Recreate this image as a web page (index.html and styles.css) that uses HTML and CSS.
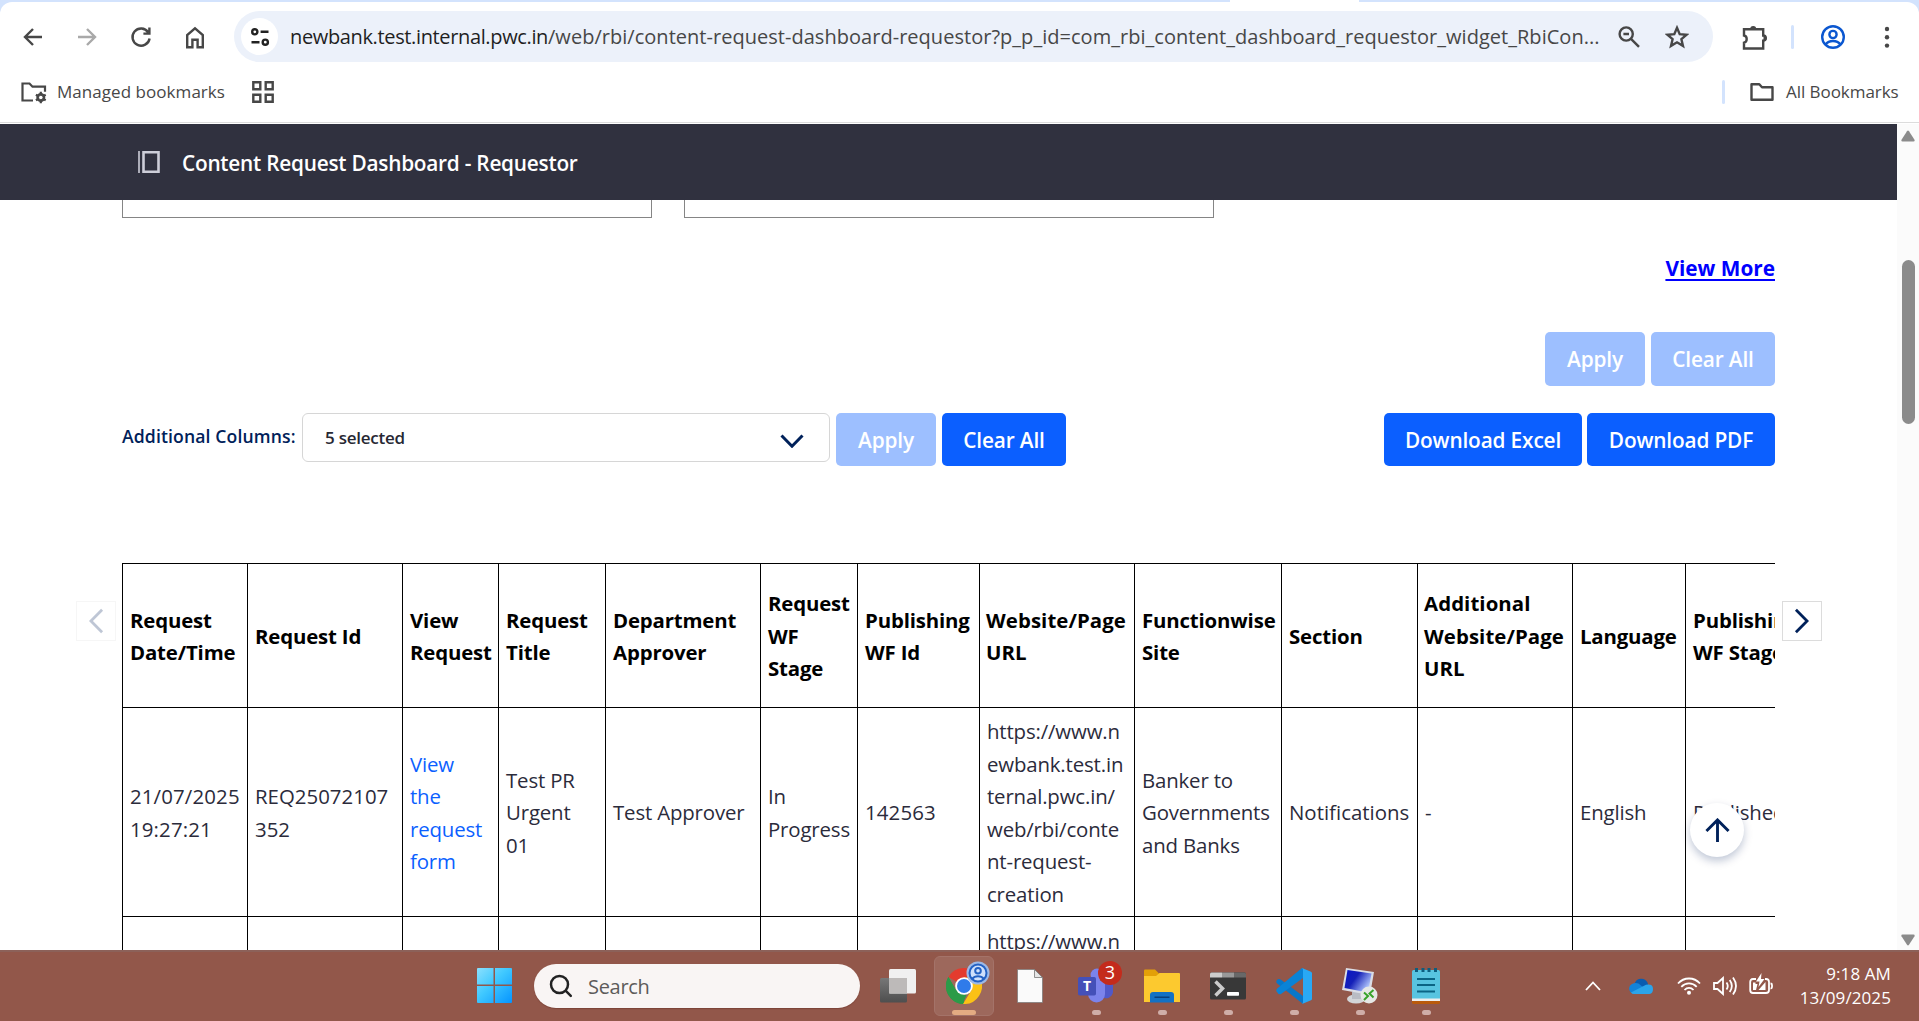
FILE: index.html
```html
<!DOCTYPE html>
<html lang="en">
<head>
<meta charset="utf-8">
<title>Content Request Dashboard - Requestor</title>
<link rel="stylesheet" href="styles.css">
</head>
<body>
<div class="screen">
  <header class="browser">
    <div class="tabstrip"><span class="tab-foot"></span></div>
    <div class="chrome-top">
      <div class="toolbar">
        <div class="nav">
          <svg class="ic" viewBox="0 0 24 24"><path d="M21 12H4M12 4L4 12l8 8"/></svg>
          <svg class="ic dim" viewBox="0 0 24 24"><path d="M3 12H20M12 4l8 8-8 8"/></svg>
          <svg class="ic" viewBox="0 0 24 24"><path d="M19.2 7.2A8.6 8.6 0 1 0 20.6 13.5M20.4 2.6v6h-6"/></svg>
          <svg class="ic" viewBox="0 0 24 24"><path d="M4.2 22.2V10L12 3.4 19.800 10v12.200h-5.200V14.700H9.400v7.500z"/></svg>
        </div>
        <div class="omnibox">
          <span class="tune"><svg class="ic" viewBox="0 0 24 24"><circle cx="6.800" cy="6.800" r="2.600"/><path d="M12.600 6.800H20.500M3.500 17.200h8"/><circle cx="17.300" cy="17.200" r="2.600"/></svg></span>
          <span class="url"><b>newbank.test.internal.pwc.in</b>/web/rbi/content-request-dashboard-requestor?p_p_id=com_rbi_content_dashboard_requestor_widget_RbiCon...</span>
          <svg class="ic lens" viewBox="0 0 24 24"><circle cx="9.200" cy="9" r="6.600"/><path d="M6.400 9h5.600M14 13.800l8 8"/></svg>
          <svg class="ic star" viewBox="0 0 24 24"><path d="M12 2.800l2.700 6.300 6.900.6-5.200 4.500 1.600 6.700-6-3.600-6 3.600 1.600-6.700-5.200-4.500 6.900-.6z"/></svg>
        </div>
        <svg class="ic puzzle" viewBox="0 0 26 26"><path d="M3 5.200h19.200v6.300a2.600 2.600 0 0 1 0 5.200V24.500H3v-5.800c3.600-.6 3.600-6.600 0-7.200z"/><path class="fill" d="M9.200 5a3 3 0 0 1 6 0zM22.500 11.200a3 3 0 0 1 0 6z"/></svg>
        <span class="bar"></span>
        <svg class="ic profile" viewBox="0 0 26 26"><circle cx="13" cy="13" r="10.800"/><circle cx="13" cy="10.500" r="3.600"/><path d="M5.500 20.500c3.500-4.600 11.500-4.600 15 0"/></svg>
        <svg class="dots" viewBox="0 0 6 24"><circle cx="3" cy="4" r="2.200"/><circle cx="3" cy="12.300" r="2.200"/><circle cx="3" cy="20.600" r="2.200"/></svg>
      </div>
      <div class="bookmarks">
        <svg class="managed" viewBox="0 0 28 24"><path d="M13 20.500H2.500V3.500h7l3 3.200H25v5"/><circle cx="20.800" cy="17.500" r="3.400"/><path d="M20.800 11.800v11.400M15.900 14.700l9.800 5.600M25.700 14.700l-9.800 5.600"/><circle class="hole" cx="20.800" cy="17.500" r="1.800"/></svg>
        <span class="bm bm-managed">Managed bookmarks</span>
        <svg class="apps" viewBox="0 0 22 22"><path d="M1.300 1.300h7v7h-7zM13.700 1.300h7v7h-7zM1.300 13.700h7v7h-7zM13.700 13.700h7v7h-7z"/></svg>
        <span class="grow"></span>
        <span class="bar"></span>
        <svg class="folder" viewBox="0 0 24 20"><path d="M1.500 2.200h7.800l2.700 3h10.500v12.500h-21z"/></svg>
        <span class="bm bm-all">All Bookmarks</span>
      </div>
    </div>
  </header>

  <div class="viewport">
    <main class="page">
      <div class="control-menu">
        <svg viewBox="0 0 22 22"><path d="M1 0v22"/><path class="thick" d="M5.500 1.300h15v19.400h-15z"/></svg>
        <h1>Content Request Dashboard - Requestor</h1>
      </div>
      <div class="content">
        <div class="fields"><div class="field"></div><div class="field"></div></div>
        <div class="more"><a href="#">View More</a></div>
        <div class="filter-actions">
          <button class="btn off w-apply">Apply</button><button class="btn off w-clear">Clear All</button>
        </div>
        <div class="columns-row">
          <label>Additional Columns:</label>
          <div class="select"><span>5 selected</span><svg viewBox="0 0 24 14"><path d="M1.500 1.500L12 12.200 22.500 1.500"/></svg></div>
          <button class="btn off w-apply">Apply</button>
          <button class="btn w-clear">Clear All</button>
          <span class="grow"></span>
          <button class="btn w-excel">Download Excel</button>
          <button class="btn w-pdf">Download PDF</button>
        </div>
        <div class="table-area">
          <div class="scroller">
            <table>
              <colgroup><col class="c125"><col class="c155"><col class="c96"><col class="c107"><col class="c155"><col class="c97"><col class="c122"><col class="c155"><col class="c147"><col class="c136"><col class="c155"><col class="c113"><col class="c155"></colgroup>
              <thead>
                <tr><th>Request<br>Date/Time</th><th>Request Id</th><th>View<br>Request</th><th>Request<br>Title</th><th>Department<br>Approver</th><th>Request<br>WF<br>Stage</th><th>Publishing<br>WF Id</th><th class="wide">Website/Page<br>URL</th><th>Functionwise<br>Site</th><th>Section</th><th class="wide">Additional<br>Website/Page<br>URL</th><th>Language</th><th>Publishing<br>WF Stage</th></tr>
              </thead>
              <tbody>
                <tr><td class="num">21/07/2025<br>19:27:21</td><td class="id">REQ25072107<br>352</td><td><a href="#">View<br>the<br>request<br>form</a></td><td>Test PR<br>Urgent<br>01</td><td>Test Approver</td><td>In<br>Progress</td><td class="num">142563</td><td>https://www.n<br>ewbank.test.in<br>ternal.pwc.in/<br>web/rbi/conte<br>nt-request-<br>creation</td><td>Banker to<br>Governments<br>and Banks</td><td class="id">Notifications</td><td>-</td><td>English</td><td>Published</td></tr>
                <tr class="partial"><td></td><td></td><td></td><td></td><td></td><td></td><td></td><td>https://www.n</td><td></td><td></td><td></td><td></td><td></td></tr>
              </tbody>
            </table>
          </div>
          <span class="pager prev"><svg viewBox="0 0 16 28"><path d="M14 2L2 14l12 12"/></svg></span>
          <span class="pager next"><svg viewBox="0 0 16 28"><path d="M2 2l12 12L2 26"/></svg></span>
        </div>
      </div>
      <span class="to-top"><svg viewBox="0 0 26 26"><path d="M13 25V2.500M1.500 13.500L13 2l11.500 11.500"/></svg></span>
    </main>
    <div class="scrollbar">
      <svg class="arrow" viewBox="0 0 14 12"><path d="M6 1.200q1-1.200 2 0l5.500 8.600q.6 1.700-1 1.700h-11q-1.600 0-1-1.700z"/></svg>
      <span class="thumb"></span>
      <svg class="arrow down" viewBox="0 0 14 12"><path d="M6 1.200q1-1.200 2 0l5.500 8.600q.6 1.700-1 1.700h-11q-1.600 0-1-1.700z"/></svg>
    </div>
  </div>

  <footer class="taskbar">
    <div class="apps-row">
      <svg class="win" viewBox="0 0 35 35"><defs><linearGradient id="w" x1="0" y1="0" x2="35" y2="35" gradientUnits="userSpaceOnUse"><stop offset="0" stop-color="#8be0fd"/><stop offset=".45" stop-color="#3fc8ff"/><stop offset="1" stop-color="#0594ff"/></linearGradient></defs><path fill="url(#w)" d="M1 0h15.500v16.500H0V1q0-1 1-1zM18 0h16q1 0 1 1v15.500H18zM0 18h16.500v17H1q-1 0-1-1zM18 18h17v16q0 1-1 1H18z"/></svg>
      <div class="search"><svg viewBox="0 0 24 24"><circle cx="10.500" cy="10.500" r="8.500"/><path d="M16.800 16.800l5 5"/></svg><span>Search</span></div>
      <div class="app"><svg viewBox="0 0 36 34"><defs><linearGradient id="a" x2="0" y2="1"><stop stop-color="#777"/><stop offset="1" stop-color="#4e4e4e"/></linearGradient></defs><rect y="9" width="27" height="24.500" rx="1.500" fill="url(#a)"/><rect x="9" width="27" height="24.500" rx="1.500" fill="#f0f0f0"/><path d="M9 9h18v15.500H9z" fill="#bdbab9"/></svg></div>
      <div class="app active"><svg viewBox="0 0 36 36"><path fill="#e33b2e" d="M18 18L2.400 9A18 18 0 0 1 33.600 9z"/><path fill="#2b9b48" d="M18 18L18 36A18 18 0 0 1 2.400 9L10.200 22.500z"/><path fill="#fbc116" d="M18 9.500H33.800A18 18 0 0 1 17 36L25.500 22z"/><path fill="#2b9b48" d="M2.400 9l7.800 13.500L18 27l3-1-4.500 10A18 18 0 0 1 2.400 9z"/><circle cx="18" cy="18" r="8.800" fill="#fff"/><circle cx="18" cy="18" r="7" fill="#2f7bea"/></svg>
        <svg class="badge-user" viewBox="0 0 24 24"><circle cx="12" cy="12" r="11.500" fill="#9db9e6"/><circle cx="12" cy="12" r="9" fill="#cfe0fb"/><g fill="none" stroke="#2462c4" stroke-width="2"><circle cx="12" cy="12" r="8.500"/><circle cx="12" cy="9.800" r="2.800"/><path d="M6 18c3-3.600 9-3.600 12 0"/></g></svg><i class="run wide"></i></div>
      <div class="app"><svg viewBox="0 0 36 36"><path fill="#fafafa" stroke="#777" stroke-width=".7" d="M5.500 1.500h17l8 8v25h-25z"/><path fill="#e6e6e6" stroke="#777" stroke-width=".8" d="M22.500 1.500v8h8z"/></svg></div>
      <div class="app"><svg viewBox="0 0 36 36"><circle cx="19" cy="7" r="6.500" fill="#7b83eb"/><path fill="#5059c9" d="M24 12h11v12a7 7 0 0 1-11 5z"/><path fill="#7b83eb" d="M10 13h17v13a8.500 8.500 0 0 1-17 0z"/><rect x="0" y="9" width="18" height="18.500" rx="1.800" fill="#4450b8"/><text class="team-t" x="9" y="23.300">T</text></svg><b class="badge">3</b><i class="run"></i></div>
      <div class="app"><svg viewBox="0 0 36 36"><path fill="#e3a008" d="M0 2.500q0-1 1-1h10l4 4v6H0z"/><path fill="#fcc92f" d="M0 8h12l3.500-3H35q1 0 1 1v28H0z"/><path fill="#1371c4" d="M6 34.500V27q0-3 3-3h18q3 0 3 3v7.500z"/><path fill="#083f7b" d="M10.500 28.500h15v1.500h-15z"/></svg><i class="run"></i></div>
      <div class="app"><svg viewBox="0 0 36 36"><rect y="4.500" width="36" height="27" rx="1.500" fill="#383838"/><path fill="#ccc" d="M0 9.500V6q0-1.500 1.500-1.500H12v5z"/><path fill="#999" d="M12 4.500h12v5H12z"/><path fill="#686868" d="M24 4.500h10.500Q36 4.500 36 6v3.500H24z"/><path d="M5.500 13.500l7 7-7 7" fill="none" stroke="#ccc" stroke-width="3.500"/><rect x="17" y="24" width="12" height="3.800" rx=".7" fill="#fff"/></svg><i class="run"></i></div>
      <div class="app"><svg viewBox="0 0 36 36"><path fill="#0877c9" d="M.6 12.500Q2.500 10 5 11.800L27 28v8L1.200 15.500Q-.3 14 .6 12.500z"/><path fill="#0a83d6" d="M.6 23.500Q-.3 22 1.200 20.500L26 0l1 .2V10L5 26Q2.500 27 .6 23.500z"/><path fill="#29a9f5" d="M26 0l9 3.800q1 .5 1 1.500v25.400q0 1-1 1.500L26 36q1-.5 1-2V2q0-1.500-1-2z"/></svg><i class="run"></i></div>
      <div class="app"><svg viewBox="0 0 36 36"><defs><linearGradient id="s" x2="1" y2=".6"><stop stop-color="#0716c8"/><stop offset=".45" stop-color="#1420b8"/><stop offset="1" stop-color="#b6ccff"/></linearGradient></defs><ellipse cx="14" cy="31" rx="9" ry="4.500" fill="#d3d5d8"/><path fill="#b9bcc4" d="M10 24h9v7h-9z"/><path fill="#dadde6" d="M4 0l28 4-4 23L0 22z"/><path fill="url(#s)" d="M5.500 2L29.500 5.500 26 24.500 2.500 20z"/><circle cx="27" cy="27" r="8.500" fill="#e6e8e6"/><path d="M22 24.500l4 3.500-4 4M31.500 22l-4 3.500 4 4" fill="none" stroke="#38a32a" stroke-width="2"/></svg><i class="run"></i></div>
      <div class="app"><svg viewBox="0 0 36 36"><path fill="#b95a0c" d="M4 30h28v4.500q0 1.500-1.500 1.500h-25Q4 36 4 34.500z"/><path fill="#eee" d="M4 28h28v5H4z"/><path fill="#58c4e0" d="M4 3.500Q4 2 5.500 2h25Q32 2 32 3.500V30.500H4z"/><path d="M8.500 0v4M15 0v4M21 0v4M27.500 0v4" stroke="#0b5e80" stroke-width="3"/><path d="M9 11h18M9 17h18M9 23.500h18" stroke="#0b6484" stroke-width="2"/></svg><i class="run"></i></div>
    </div>
    <div class="tray">
      <svg class="t-up" viewBox="0 0 16 10"><path d="M1 9l7-7.500L15 9"/></svg>
      <svg class="t-cloud" viewBox="0 0 24 16"><path fill="#0a5cb0" d="M5.500 6a7 7 0 0 1 13-1.500l1 4-9 2z"/><path fill="#1283da" d="M5 15.500A5 5 0 0 1 3 6q5-2.500 9 1.500l4 3-4 5z"/><path fill="#2ba4ea" d="M2 14.500L17 6.800Q24 5.500 24 11t-5 5H5q-2 0-3-1.500z"/></svg>
      <svg class="t-wifi" viewBox="0 0 24 18"><path d="M1 6.500c6-6.700 16-6.700 22 0M4.300 9.800c4.400-4.600 11-4.600 15.400 0M7.500 13c2.600-2.800 6.400-2.800 9 0"/><circle cx="12" cy="15.800" r="2"/></svg>
      <svg class="t-vol" viewBox="0 0 24 20"><path d="M1 7h3.500L10 2v16l-5.500-5H1zM13.500 6.500q2.500 3.500 0 7M16.700 4q4.300 6 0 12M20 1.500q6 8.500 0 17"/></svg>
      <svg class="t-bat" viewBox="0 0 24 22"><path d="M7 6H4Q1.200 6 1.200 9v8q0 3 2.800 3h13q3 0 3-3V9q0-3-3-3h-1M21.500 10.500q1.500 0 1.500 1.500v2q0 1.500-1.500 1.500"/><path class="solid" d="M12.500 0L7 8.500h3.500L9.500 14l6-8h-3.500zM4 9.500h2.500v1.500h2l-1.500 6h2.500l7-8V17H4z"/></svg>
      <div class="clock"><span class="time">9:18 AM</span><span class="date">13/09/2025</span></div>
    </div>
  </footer>
</div>
</body>
</html>
```
FILE: styles.css
```css
* { box-sizing: border-box; }
body { margin: 0; font-family: "Open Sans", "Noto Sans", sans-serif; background: #fff; }
svg { display: block; flex: none; }
.grow { flex: 1; }
.screen { width: 1919px; height: 1021px; overflow: hidden; display: flex; flex-direction: column; }

/* browser frame */
.browser { height: 124px; background: #d3e3fd; flex: none; display: flex; flex-direction: column; }
.tabstrip { height: 2px; padding-left: 1230px; }
.tab-foot { display: block; width: 129px; height: 2px; background: #fff; }
.chrome-top { flex: 1; background: #fff; border-radius: 12px 12px 0 0; border-bottom: 1px solid #fff; box-shadow: inset 0 -1px #dcdcdc; }
.toolbar { height: 69px; display: flex; align-items: center; }
.nav { display: flex; gap: 30px; padding-left: 21px; width: 234px; }
.ic { width: 24px; height: 24px; fill: none; stroke: #474747; stroke-width: 2.4; }
.dim { stroke: #a9a9a9; }
.omnibox { width: 1479px; height: 51px; border-radius: 26px; background: #ecf1fa; display: flex; align-items: center; padding-left: 7px; }
.tune { width: 37px; height: 37px; border-radius: 50%; background: #fff; display: flex; align-items: center; justify-content: center; margin-right: 12px; }
.tune .ic { stroke: #222; }
.url { width: 1327px; font-size: 20px; letter-spacing: 0.03px; color: #474747; white-space: nowrap; line-height: 30px; }
.url b { font-weight: 400; color: #1f1f1f; letter-spacing: -0.36px; }
.star { margin-left: 24px; }
.puzzle { width: 26px; height: 26px; margin-left: 28px; }
.ic .fill { fill: #474747; stroke: none; }
.bar { width: 3px; height: 24px; background: #d3e3fd; border-radius: 2px; }
.toolbar .bar { margin-left: 24px; }
.profile { width: 26px; height: 26px; margin-left: 26px; stroke: #0b57d0; }
.dots { width: 6px; height: 24px; fill: #474747; margin-left: 38px; }
.bookmarks { height: 42px; display: flex; align-items: center; padding: 0 20px 0 20px; }
.bm { font-size: 17px; line-height: 24px; color: #474747; white-space: nowrap; }
.bm-managed { width: 195px; letter-spacing: 0.05px; }
.bm-all { letter-spacing: -0.05px; width: 113px; }
.managed { width: 28px; height: 24px; margin-right: 9px; fill: none; stroke: #474747; stroke-width: 2.2; }
.managed .hole { fill: #fff; stroke: none; }
.apps { width: 22px; height: 22px; fill: none; stroke: #474747; stroke-width: 2.4; }
.folder { width: 24px; height: 20px; margin: 0 12px 0 25px; fill: none; stroke: #474747; stroke-width: 2.4; stroke-linejoin: round; }

/* page */
.viewport { height: 826px; display: flex; flex: none; overflow: hidden; }
.page { position: relative; width: 1897px; overflow: hidden; }
.control-menu { height: 76px; background: #30313f; display: flex; align-items: center; padding-left: 138px; gap: 22px; }
.control-menu svg { width: 22px; height: 22px; fill: none; stroke: #cdced9; stroke-width: 1.6; }
.control-menu .thick { stroke-width: 2.6; }
.control-menu h1 { margin: 0; padding-top: 1px; font-size: 20.800px; font-weight: 600; color: #fff; letter-spacing: -0.24px; white-space: nowrap; }
.content { padding: 0 122px; }
.fields { display: flex; gap: 32px; height: 18px; }
.field { width: 530px; border: 1px solid #858585; border-top: 0; }
.more { height: 114px; padding-top: 34px; text-align: right; line-height: 32px; }
.more a { font-size: 20.800px; font-weight: 700; color: #00f; letter-spacing: 0; text-decoration-thickness: 2px; text-underline-offset: 3px; }
.filter-actions { display: flex; justify-content: flex-end; gap: 6px; height: 81px; }
.filter-actions .btn { height: 54px; }
.btn { height: 53px; border: 0; border-radius: 5px; background: #0b5fff; color: #fff; font: 600 20.800px "Open Sans", sans-serif; letter-spacing: -0.15px; padding: 0; white-space: nowrap; flex: none; }
.btn.off { background: #9dbfff; }
.w-apply { width: 100px; }
.w-clear { width: 124px; }
.w-excel { width: 198px; }
.w-pdf { width: 188px; }
.columns-row { display: flex; height: 150px; align-items: flex-start; }
.columns-row label { width: 180px; font-size: 17.600px; font-weight: 600; line-height: 47px; color: #00215a; white-space: nowrap; letter-spacing: 0.13px; }
.select { width: 528px; height: 49px; border: 1px solid #d6d6d6; border-radius: 6px; display: flex; align-items: center; justify-content: space-between; padding: 0 25px 0 22px; margin-right: 6px; font-size: 17px; font-weight: 600; letter-spacing: -0.25px; color: #272833; }
.select svg { width: 24px; height: 14px; margin-top: 6px; fill: none; stroke: #00215a; stroke-width: 3; }
.columns-row .w-clear { margin-left: 6px; }
.columns-row .w-pdf { margin-left: 5px; }
.table-area { position: relative; height: 390px; }
.scroller { width: 1653px; overflow: hidden; }
table { width: 1718px; table-layout: fixed; border-collapse: collapse; font-size: 20.400px; line-height: 32.500px; color: #2b2b3b; }
th, td { border: 1px solid #000; padding: 1px 0 0 7px; text-align: left; vertical-align: middle; white-space: nowrap; overflow: hidden; }
th { height: 144px; color: #000; font-weight: 700; letter-spacing: -0.16px; }
th.wide { letter-spacing: 0.08px; padding-left: 6px; }
td { height: 209px; letter-spacing: -0.15px; }
td.num { letter-spacing: 0.15px; }
td.id { letter-spacing: 0.02px; }
.partial td { vertical-align: top; padding-top: 8px; }
td a { color: #0b5fff; text-decoration: none; }
.c125 { width: 125px; } .c155 { width: 155px; } .c96 { width: 96px; } .c107 { width: 107px; } .c97 { width: 97px; }
.c122 { width: 122px; } .c147 { width: 147px; } .c136 { width: 136px; } .c113 { width: 113px; }
.pager { position: absolute; top: 38px; width: 40px; height: 40px; border: 1px solid #dcdcdc; background: #fff; display: flex; align-items: center; justify-content: center; }
.pager svg { width: 15px; height: 26px; fill: none; stroke: #00215a; stroke-width: 3; }
.prev { left: -46px; opacity: .25; }
.next { left: 1660px; padding-right: 2px; }
.to-top { position: absolute; left: 1690px; top: 679px; width: 54px; height: 54px; border-radius: 50%; background: #fff; box-shadow: 0 4px 9px rgba(0, 33, 90, .25); display: flex; align-items: center; justify-content: center; }
.to-top svg { width: 25px; height: 25px; fill: none; stroke: #00215a; stroke-width: 3; }
.scrollbar { width: 22px; background: #fbfbfb; display: flex; flex-direction: column; align-items: center; padding: 6px 0 4px; }
.arrow { width: 14px; height: 12px; fill: #8b8b8b; }
.thumb { width: 13px; height: 164px; border-radius: 7px; background: #8b8b8b; margin: 118px 0 auto; }
.down { transform: rotate(180deg); }

/* taskbar */
.taskbar { height: 71px; background: #92574a; box-shadow: inset 0 2px #8c6159; display: flex; justify-content: space-between; align-items: center; padding: 0 28px 0 477px; flex: none; }
.apps-row { display: flex; align-items: center; }
.win { width: 35px; height: 35px; }
.search { width: 326px; height: 44px; border-radius: 22px; background: #f9f5f4; box-shadow: 0 1px 1px #7d4438; margin: 0 8px 0 22px; display: flex; align-items: center; padding-left: 15px; gap: 15px; font-size: 20px; color: #5d5b5a; letter-spacing: -.3px; }
.search span { padding-top: 1px; }
.search svg { width: 24px; height: 24px; fill: none; stroke: #222; stroke-width: 2.500; stroke-linecap: round; }
.app { position: relative; width: 60px; height: 60px; margin-right: 6px; border-radius: 6px; display: flex; align-items: center; justify-content: center; }
.app > svg { width: 36px; height: 36px; }
.app.active { background: #9d685c; border: 1px solid #a47369; }
.app > .badge-user { position: absolute; right: 3px; top: 4px; width: 24px; height: 24px; }
.team-t { font: 700 14px "Open Sans", sans-serif; fill: #fff; text-anchor: middle; }
.badge { position: absolute; right: 4px; top: 5px; width: 24px; height: 24px; border-radius: 50%; background: #c42b1c; color: #fff; font-weight: 400; font-size: 18px; line-height: 23px; text-align: center; }
.run { position: absolute; left: 26px; bottom: 1px; width: 9px; height: 5px; border-radius: 3px; background: #cfaea8; }
.run.wide { left: 17px; bottom: 0; width: 24px; background: #e3ab82; }
.tray { display: flex; align-items: center; }
.tray svg { fill: none; stroke: #fff; stroke-width: 1.800; }
.t-up { width: 16px; height: 10px; margin-right: 28px; }
.tray .t-cloud { width: 24px; height: 16px; margin-right: 24px; stroke: none; }
.t-wifi { width: 24px; height: 18px; margin-right: 12px; }
.t-wifi circle { fill: #fff; stroke: none; }
.t-vol { width: 24px; height: 20px; margin-right: 12px; }
.t-bat { width: 24px; height: 22px; margin-bottom: 4px; }
.tray .t-bat .solid { fill: #fff; stroke: none; }
.clock { width: 118px; color: #fff; font-size: 17px; line-height: 24px; text-align: right; display: flex; flex-direction: column; letter-spacing: .1px; }
```
